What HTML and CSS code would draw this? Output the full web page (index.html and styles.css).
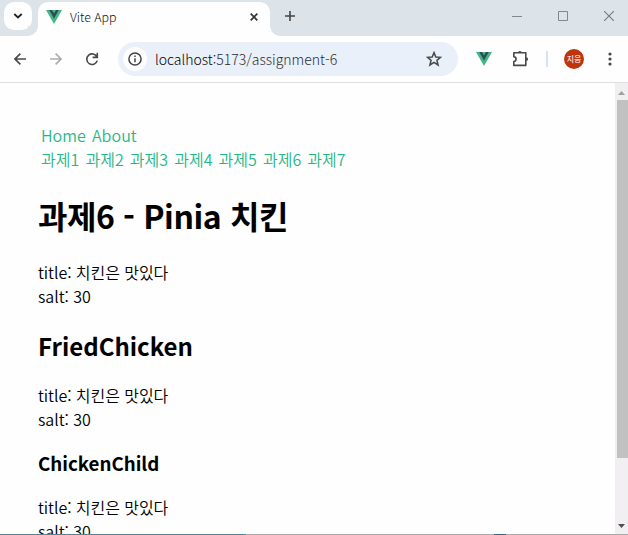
FILE: index.html
```html
<!DOCTYPE html>
<html lang="ko">
<head>
<meta charset="utf-8">
<title>Vite App</title>
<link rel="stylesheet" href="styles.css">
</head>
<body>
<div class="browser">
  <header class="tabstrip">
    <button class="tab-search" aria-label="Search tabs"><svg width="28" height="28" viewBox="0 0 28 28"><path d="M10.300 12 14 15.500 17.700 12" fill="none" stroke="#222" stroke-width="1.8"/></svg></button>
    <div class="tab">
      <svg class="vue" width="16" height="14" viewBox="0 0 16 14"><path d="M0 0h16L8 14z" fill="#41b883"/><path d="M3.2 0H6l2 3.4L10 0h2.8L8 8.4z" fill="#34495e"/></svg>
      <span class="tab-title">Vite App</span>
      <svg class="tab-close" width="8" height="8" viewBox="0 0 8 8"><path d="M.7.7l6.6 6.6M7.3.7.7 7.3" stroke="#333" stroke-width="1.7"/></svg>
    </div>
    <svg class="new-tab" width="10" height="10" viewBox="0 0 10 10"><path d="M5 0v10M0 5h10" stroke="#444" stroke-width="1.6"/></svg>
    <div class="window-controls">
      <svg width="10" height="10" viewBox="0 0 10 10"><path d="M0 5.5h10" stroke="#858789"/></svg>
      <svg width="10" height="10" viewBox="0 0 10 10"><path d="M.5.5h9v9h-9z" fill="none" stroke="#858789"/></svg>
      <svg width="10" height="10" viewBox="0 0 10 10"><path d="M0 0l10 10M10 0 0 10" stroke="#77797b" stroke-width="1.1"/></svg>
    </div>
  </header>
  <div class="toolbar">
    <svg class="back" width="12" height="12" viewBox="0 0 12 12"><path d="M12 6H1M6.4.6 1 6l5.4 5.4" fill="none" stroke="#484848" stroke-width="1.6"/></svg>
    <svg class="forward" width="12" height="12" viewBox="0 0 12 12"><path d="M0 6h11M5.6.6 11 6l-5.4 5.4" fill="none" stroke="#adadad" stroke-width="1.6"/></svg>
    <svg class="reload" width="14" height="14" viewBox="0 0 14 14"><path d="M12 5.2A5.3 5.3 0 1 0 12.2 8.6M12.3.8v4.6H7.6" fill="none" stroke="#484848" stroke-width="1.6"/></svg>
    <div class="address">
      <span class="info"><svg width="14" height="14" viewBox="0 0 14 14"><circle cx="7" cy="7" r="6.1" fill="none" stroke="#444" stroke-width="1.5"/><path d="M7 6.2v4M7 3.6v1.5" stroke="#444" stroke-width="1.5"/></svg></span>
      <span class="url"><b>localhost:</b>5173/assignment-6</span>
      <svg class="star" width="16" height="16" viewBox="0 0 16 16"><path d="M8 1.6 9.8 6l4.7.3-3.6 3 1.2 4.7L8 11.4 3.9 14l1.2-4.7-3.6-3L6.2 6z" fill="none" stroke="#484848" stroke-width="1.5"/></svg>
    </div>
    <svg class="vue ext" width="16" height="14" viewBox="0 0 16 14"><path d="M0 0h16L8 14z" fill="#41b883"/><path d="M3.2 0H6l2 3.4L10 0h2.8L8 8.4z" fill="#34495e"/></svg>
    <svg class="puzzle" width="17" height="17" viewBox="0 0 17 17"><path d="M1.800 1.800h12v12.600h-12v-3.800c3-.5 3-4.500 0-5z" fill="none" stroke="#484848" stroke-width="1.600" stroke-linejoin="round"/><path d="M6 1.600a1.900 1.600 0 0 1 3.800 0zM14.200 6.200a1.900 1.900 0 0 1 0 3.800z" fill="#484848"/></svg>
    <i class="divider"></i>
    <span class="avatar">지웅</span>
    <svg class="more" width="4" height="14" viewBox="0 0 4 14"><circle cx="2" cy="2" r="1.6" fill="#484848"/><circle cx="2" cy="7" r="1.6" fill="#484848"/><circle cx="2" cy="12" r="1.6" fill="#484848"/></svg>
  </div>
  <div class="viewport">
    <main class="page">
      <nav>
        <div><a>Home</a><a>About</a></div>
        <div><a>과제1</a><a>과제2</a><a>과제3</a><a>과제4</a><a>과제5</a><a>과제6</a><a>과제7</a></div>
      </nav>
      <h1>과제6 - Pinia 치킨</h1>
      <p>title: 치킨은 맛있다</p><p>salt: 30</p>
      <h2>FriedChicken</h2>
      <p>title: 치킨은 맛있다</p><p>salt: 30</p>
      <h3>ChickenChild</h3>
      <p>title: 치킨은 맛있다</p><p>salt: 30</p>
    </main>
    <div class="scrollbar">
      <svg width="7" height="4" viewBox="0 0 7 4"><path d="M0 4 3.5 0 7 4z" fill="#a0a0a0"/></svg>
      <div class="thumb"></div>
      <svg class="down" width="7" height="4" viewBox="0 0 7 4"><path d="M0 0h7L3.500 4z" fill="#505050"/></svg>
    </div>
  </div>
  <footer class="edge"></footer>
</div>
</body>
</html>
```
FILE: styles.css
```css
* { box-sizing: border-box; margin: 0; }
svg { display: block; flex: none; }
body { background: #fefefe; color: #000; font: 16px/24px "Noto Sans CJK KR", sans-serif; overflow: hidden; }
.browser { width: 628px; height: 535px; display: flex; flex-direction: column; overflow: hidden; }
.tabstrip { height: 36px; flex: none; display: flex; background: #dce3e9; }
.tab-search { width: 28px; height: 28px; margin: 2px 6px 0 4px; padding: 0; border: 0; border-radius: 10px; background: #fefefe; }
.tab { position: relative; width: 232px; height: 34px; margin-top: 2px; padding: 0 12px 4px 8px; display: flex; align-items: center; background: #fefefe; border-radius: 10px 10px 0 0; }
.tab::before, .tab::after { content: ""; position: absolute; bottom: 0; width: 10px; height: 10px; }
.tab::before { left: -10px; background: radial-gradient(circle at 0 0, #dce3e9 9.500px, #fefefe 10px); }
.tab::after { right: -10px; background: radial-gradient(circle at 100% 0, #dce3e9 9.500px, #fefefe 10px); }
.tab-title { margin-left: 8px; font-size: 12.400px; font-weight: 300; color: #111; }
.tab-close { margin-left: auto; }
.new-tab { margin: 11px 0 0 15px; }
.window-controls { display: flex; gap: 36px; margin: 11px 14px 0 auto; }
.toolbar { height: 47px; flex: none; display: flex; align-items: center; background: #fefefe; border-bottom: 1px solid #dfdfdf; }
.back { margin-left: 14px; }
.forward { margin-left: 24px; }
.reload { margin-left: 23px; }
.address { width: 340px; height: 34px; margin-left: 19px; padding: 0 16px 0 5px; display: flex; align-items: center; border-radius: 17px; background: #eaf0f9; }
.info { width: 24px; height: 24px; display: flex; align-items: center; justify-content: center; border-radius: 50%; background: #fefefe; }
.url { margin-left: 8px; font-size: 14px; font-weight: 300; color: #2c2c2c; }
.url b { font-weight: 300; color: #000; }
.star { margin-left: auto; }
.ext { margin-left: 18px; }
.puzzle { margin-left: 20px; }
.divider { width: 2px; height: 16px; margin-left: 17px; background: #d3e4f8; }
.avatar { width: 20px; height: 20px; margin-left: 16px; border-radius: 50%; background: #bf360c; color: #fff; font-size: 8px; line-height: 20px; text-align: center; }
.more { margin-left: 24px; }
.viewport { height: 451px; flex: none; display: flex; overflow: hidden; }
.page { flex: 1; padding: 40px 38px 0; font-weight: 350; letter-spacing: -.050px; }
nav { color: #1fb888; letter-spacing: .050px; }
nav div { display: flex; }
nav a { padding: 0 3px; }
h1, h2, h3 { color: #000; font-weight: 700; letter-spacing: 0; }
h1 { height: 89px; font-size: 32px; line-height: 88px; letter-spacing: -.400px; }
h2 { height: 75px; font-size: 24px; line-height: 75px; }
h3 { height: 64px; font-size: 18.720px; line-height: 64px; }
.scrollbar { width: 13px; padding: 8px 0 6px; display: flex; flex-direction: column; align-items: center; background: #f1eff2; }
.thumb { align-self: flex-end; width: 11px; height: 358px; margin-top: 5px; background: #c1c1c1; }
.down { margin-top: auto; }
.edge { height: 1px; flex: none; background: linear-gradient(90deg, #52869d 246px, #aaa 246px 494px, #38678c 494px 506px, #aaa 506px); }
```
